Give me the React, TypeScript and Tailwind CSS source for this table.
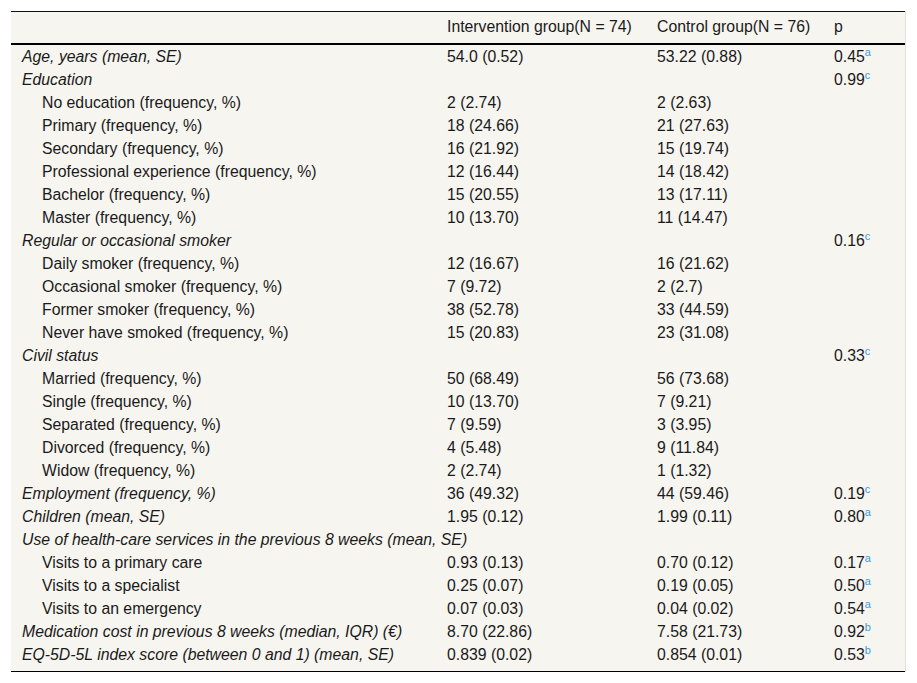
import React from "react";

type Row = {
  label: string;
  italic?: boolean;
  indent?: boolean;
  a?: string;
  b?: string;
  p?: string;
  sup?: string;
};

const rows: Row[] = [
  { label: "Age, years (mean, SE)", italic: true, a: "54.0 (0.52)", b: "53.22 (0.88)", p: "0.45", sup: "a" },
  { label: "Education", italic: true, p: "0.99", sup: "c" },
  { label: "No education (frequency, %)", indent: true, a: "2 (2.74)", b: "2 (2.63)" },
  { label: "Primary (frequency, %)", indent: true, a: "18 (24.66)", b: "21 (27.63)" },
  { label: "Secondary (frequency, %)", indent: true, a: "16 (21.92)", b: "15 (19.74)" },
  { label: "Professional experience (frequency, %)", indent: true, a: "12 (16.44)", b: "14 (18.42)" },
  { label: "Bachelor (frequency, %)", indent: true, a: "15 (20.55)", b: "13 (17.11)" },
  { label: "Master (frequency, %)", indent: true, a: "10 (13.70)", b: "11 (14.47)" },
  { label: "Regular or occasional smoker", italic: true, p: "0.16", sup: "c" },
  { label: "Daily smoker (frequency, %)", indent: true, a: "12 (16.67)", b: "16 (21.62)" },
  { label: "Occasional smoker (frequency, %)", indent: true, a: "7 (9.72)", b: "2 (2.7)" },
  { label: "Former smoker (frequency, %)", indent: true, a: "38 (52.78)", b: "33 (44.59)" },
  { label: "Never have smoked (frequency, %)", indent: true, a: "15 (20.83)", b: "23 (31.08)" },
  { label: "Civil status", italic: true, p: "0.33", sup: "c" },
  { label: "Married (frequency, %)", indent: true, a: "50 (68.49)", b: "56 (73.68)" },
  { label: "Single (frequency, %)", indent: true, a: "10 (13.70)", b: "7 (9.21)" },
  { label: "Separated (frequency, %)", indent: true, a: "7 (9.59)", b: "3 (3.95)" },
  { label: "Divorced (frequency, %)", indent: true, a: "4 (5.48)", b: "9 (11.84)" },
  { label: "Widow (frequency, %)", indent: true, a: "2 (2.74)", b: "1 (1.32)" },
  { label: "Employment (frequency, %)", italic: true, a: "36 (49.32)", b: "44 (59.46)", p: "0.19", sup: "c" },
  { label: "Children (mean, SE)", italic: true, a: "1.95 (0.12)", b: "1.99 (0.11)", p: "0.80", sup: "a" },
  { label: "Use of health-care services in the previous 8 weeks (mean, SE)", italic: true },
  { label: "Visits to a primary care", indent: true, a: "0.93 (0.13)", b: "0.70 (0.12)", p: "0.17", sup: "a" },
  { label: "Visits to a specialist", indent: true, a: "0.25 (0.07)", b: "0.19 (0.05)", p: "0.50", sup: "a" },
  { label: "Visits to an emergency", indent: true, a: "0.07 (0.03)", b: "0.04 (0.02)", p: "0.54", sup: "a" },
  { label: "Medication cost in previous 8 weeks (median, IQR) (€)", italic: true, a: "8.70 (22.86)", b: "7.58 (21.73)", p: "0.92", sup: "b" },
  { label: "EQ-5D-5L index score (between 0 and 1) (mean, SE)", italic: true, a: "0.839 (0.02)", b: "0.854 (0.01)", p: "0.53", sup: "b" },
];

const cols = "grid grid-cols-[425px_210px_177px_83px]";

export default function App() {
  return (
    <div
      className="min-h-[683px] w-[917px] bg-white pl-[11px] pt-[11px] text-[15.8px] text-[#1a1a1a]"
      style={{ fontFamily: '"Liberation Sans", Arial, sans-serif' }}
    >
      <div className="w-[895px] bg-[#f7f5f0] border-r border-[#e4e2de]">
        <div className={`${cols} h-[34px] border-t border-b-2 border-black border-t-[#111]`}>
          <div />
          <div className="flex items-center px-[11px] pb-[1px] whitespace-nowrap">Intervention group(N = 74)</div>
          <div className="flex items-center px-[11px] pb-[1px] whitespace-nowrap">Control group(N = 76)</div>
          <div className="flex items-center px-[11px] pb-[1px]">p</div>
        </div>
        <div className="pb-[5px] border-b border-black">
          {rows.map((r, i) => (
            <div key={i} className={`${cols} h-[23px] items-center leading-[23px]`}>
              <div
                className={`${r.indent ? "pl-[31px]" : "pl-[11px]"} ${r.italic ? "italic" : ""} whitespace-nowrap`}
              >
                {r.label}
              </div>
              <div className="px-[11px] whitespace-nowrap">{r.a ?? ""}</div>
              <div className="px-[11px] whitespace-nowrap">{r.b ?? ""}</div>
              <div className="px-[11px] whitespace-nowrap">
                {r.p ?? ""}
                {r.sup ? (
                  <sup className="text-[11px] text-[#3a9ad9] -top-[6px]">{r.sup}</sup>
                ) : null}
              </div>
            </div>
          ))}
        </div>
      </div>
    </div>
  );
}
